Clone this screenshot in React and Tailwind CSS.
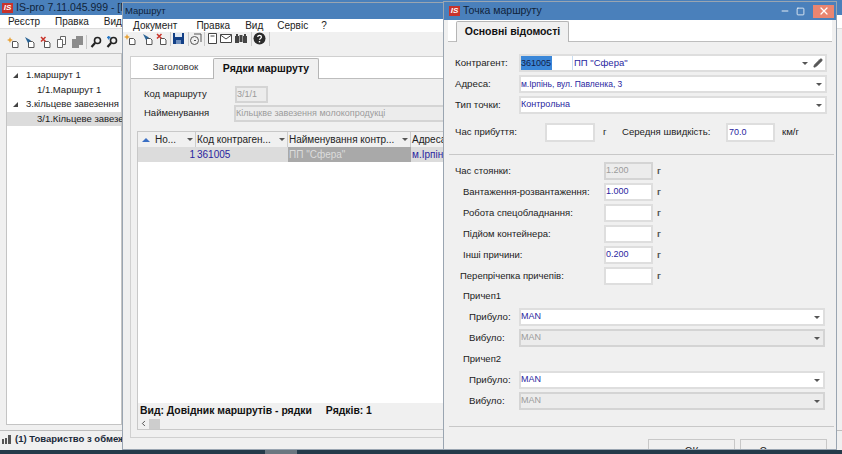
import { Fragment } from "react";
import { ChevronLeft, Minus, Pencil, Square, X } from "lucide-react";

const Arrow = ({ className = "" }) => (
  <span className={"ml-auto w-0 h-0 border-x-[3px] border-x-transparent border-t-[3px] border-t-[#555] " + className}></span>
);

// іконки панелі інструментів
const DocIcon = ({ mark, className = "" }) => (
  <svg className={className} width="14" height="14" viewBox="0 0 14 14">
    <path d="M6.500 6.500h4l1.500 1.500v4.500H6.500z" fill="#fff" stroke="#555" />
    {mark === "new" && <path d="M4 2l.9 2.100L7 5l-2.100.9L4 8l-.9-2.100L1 5l2.100-.9z" fill="#e8a33a" />}
    {mark === "edit" && <path d="M3 2l6 3.500-3 2.500z" fill="#2a6496" />}
    {mark === "del" && <path d="M3 2l4.500 4.500M7.500 2L3 6.500" stroke="#c8342b" strokeWidth="1.500" />}
  </svg>
);
const Copy = () => (
  <svg width="14" height="14" viewBox="0 0 14 14" fill="#fff" stroke="#666">
    <path d="M6.500 1.500h5v8h-5z" />
    <path d="M3.500 4.500h5v8h-5z" />
  </svg>
);
const CopyGray = () => (
  <svg width="14" height="14" viewBox="0 0 14 14" fill="#8c8c8c">
    <path d="M6 1h7v9H6z" />
    <path d="M2 4h7v9H2z" />
  </svg>
);
const Search = ({ plus }) => (
  <svg width="14" height="14" viewBox="0 0 14 14" fill="none" stroke="#222" strokeWidth="1.600">
    <circle cx="8.500" cy="5.500" r="3" />
    <path d="M6 8L2.500 12" strokeWidth="2.200" />
    {plus && <path d="M2 2.500h3.500M3.700 1v3.500" stroke="#2a78c4" strokeWidth="1.400" />}
  </svg>
);
const Save = ({ className = "" }) => (
  <svg className={className} width="13" height="13" viewBox="0 0 13 13">
    <path d="M1 1h11v11H1z" fill="#123f86" />
    <path d="M3 1h7v4H3z" fill="#dfe8f4" />
    <path d="M4 8h5v4H4z" fill="#6f8fbd" />
  </svg>
);
const Refresh = ({ className = "" }) => (
  <svg className={className} width="14" height="14" viewBox="0 0 14 14" fill="none" stroke="#555">
    <circle cx="5.500" cy="8.500" r="4" />
    <path d="M5 2h7v8" />
    <path d="M5 8.500h2" />
  </svg>
);
const Page = ({ className = "" }) => (
  <svg className={className} width="13" height="13" viewBox="0 0 13 13" fill="#fff" stroke="#444">
    <path d="M2.500 1.500h8v10h-8z" />
    <path d="M4.500 4h4" />
  </svg>
);
const Mail = ({ className = "" }) => (
  <svg className={className} width="14" height="13" viewBox="0 0 14 13" fill="#fff" stroke="#444">
    <path d="M1.500 2.500h11v8h-11z" />
    <path d="M1.500 3l5.500 4 5.500-4" fill="none" />
  </svg>
);
const Binoc = ({ className = "" }) => (
  <svg className={className} width="14" height="13" viewBox="0 0 14 13" fill="#444">
    <path d="M1 4h4v7H1zM9 4h4v7H9zM2 2h2v2H2zM10 2h2v2h-2zM5.500 3h3v7h-3z" />
  </svg>
);
const Help = ({ className = "" }) => (
  <svg className={className} width="13" height="13" viewBox="0 0 13 13">
    <circle cx="6.500" cy="6.500" r="6" fill="#2b2b2b" />
    <path d="M4.700 5c0-2.300 3.700-2.300 3.700 0 0 1.400-1.900 1.400-1.900 2.800" stroke="#fff" strokeWidth="1.300" fill="none" />
    <path d="M5.800 9h1.400v1.400H5.800z" fill="#fff" />
  </svg>
);
const Logo = () => (
  <span className="flex items-center justify-center w-[11px] h-[10px] bg-[#c8322b] text-white text-[8px] font-bold italic leading-none shrink-0">IS</span>
);
const Sep = ({ className = "" }) => <span className={"w-px h-[14px] bg-[#c9c9c9] shrink-0 " + className}></span>;

// віконна рамка для вільно розміщених вікон
const Window = ({ className, children }) => (
  <div className={"absolute flex flex-col overflow-hidden bg-[#f0f0f0] border border-[#9aa5b1] " + className}>{children}</div>
);

const Field = ({ children, disabled, className = "" }) => (
  <div className={"flex items-center border-2 text-[9px] whitespace-nowrap " + (disabled ? "border-[#d4d4d4] bg-[#ececec] text-[#9b9b9b] " : "border-[#dedede] bg-white text-[#2a1fa0] ") + className}>
    {children}
  </div>
);

const hours = [
  ["Час стоянки:", "1.200", true, "pl-[6px]"],
  ["Вантаження-розвантаження:", "1.000", false, "pl-[14px]"],
  ["Робота спецобладнання:", "", false, "pl-[14px]"],
  ["Підйом контейнера:", "", false, "pl-[14px]"],
  ["Інші причини:", "0.200", false, "pl-[14px]"],
  ["Перепрічепка причепів:", "", false, "pl-[11px]"],
];

const trailers = ["Причеп1", "Причеп2"];

export default function App() {
  return (
    <div className="relative w-[842px] h-[454px] overflow-hidden bg-[#f0f0f0] font-['Liberation_Sans',sans-serif] text-[10px] text-[#222]">
      {/* головне вікно */}
      <div className="flex flex-col">
        <div className="flex items-center gap-[3px] h-[15px] bg-[#4a80bb] pl-[2px] text-[10.500px] whitespace-nowrap">
          <Logo />
          <span className="text-[#10233a]">IS-pro 7.11.045.999 - [Ма</span>
        </div>
        <div className="flex items-center gap-[15px] h-[13px] pl-[8px] bg-white text-[10px]">
          <span>Реєстр</span>
          <span>Правка</span>
          <span>Вид</span>
        </div>
        <div className="flex items-center gap-[2px] h-[25px] pt-[2px] pl-[6px] border-t border-[#ddd]">
          <DocIcon mark="new" />
          <DocIcon mark="edit" />
          <DocIcon mark="del" />
          <Copy />
          <CopyGray />
          <Sep />
          <Search />
          <Search plus />
          <Refresh />
        </div>
        <div className="flex flex-col w-[116px] ml-[6px] h-[372px] border border-[#c4c4c4]">
          <div className="h-[13px] bg-[#f0f0f0] border-b border-[#cfcfcf]"></div>
          <div className="flex flex-col flex-1 bg-white pt-[1px] text-[9.500px] leading-[14.500px] whitespace-nowrap">
            <div className="flex items-center pl-[6px]">
              <span className="w-0 h-0 border-l-[5px] border-l-transparent border-b-[5px] border-b-[#444] mr-[8px]"></span>
              1.маршрут 1
            </div>
            <div className="pl-[30px]">1/1.Маршрут 1</div>
            <div className="flex items-center pl-[6px]">
              <span className="w-0 h-0 border-l-[5px] border-l-transparent border-b-[5px] border-b-[#444] mr-[8px]"></span>
              3.кільцеве завезення
            </div>
            <div className="pl-[30px] bg-[#dcdcdc]">3/1.Кільцеве завезе.</div>
          </div>
        </div>
        <div className="flex items-center gap-[3px] h-[18px] pl-[2px] mt-[5px] border-t border-[#bdbdbd] font-bold text-[9.500px] text-[#1b2a3a] whitespace-nowrap">
          <svg width="10" height="9" viewBox="0 0 10 9" fill="#555">
            <path d="M0 4h2v5H0zM3 3h2v6H3zM6 0h3v9H6z" />
          </svg>
          (1) Товариство з обмеж
        </div>
      </div>
      <div className="absolute left-0 right-0 bottom-0 flex h-[4px] bg-[#243b4a]">
        <span className="ml-[265px] w-[32px] bg-[#6b7780]"></span>
      </div>

      {/* вікно Маршрут */}
      <Window className="left-[122px] top-[2px] w-[322px] h-[448px]">
        <div className="flex items-center shrink-0 h-[16px] pl-[2px] bg-[#4a80bb] text-[9.500px] text-[#10233a]">Маршрут</div>
        <div className="flex items-center shrink-0 h-[13px] pl-[10px] bg-white text-[10px]">
          <span>Документ</span>
          <span className="ml-[19px]">Правка</span>
          <span className="ml-[15px]">Вид</span>
          <span className="ml-[14px]">Сервіс</span>
          <span className="ml-[13px]">?</span>
        </div>
        <div className="flex items-center shrink-0 h-[13px]">
          <DocIcon mark="new" />
          <DocIcon mark="edit" className="ml-[3px]" />
          <DocIcon mark="del" />
          <Sep className="ml-[2px]" />
          <Save className="ml-[1px]" />
          <Sep className="ml-[3px]" />
          <Refresh />
          <Sep className="ml-[1px]" />
          <Page className="ml-[1px]" />
          <Mail />
          <Binoc className="ml-[1px]" />
          <Sep className="ml-[3px]" />
          <Help className="ml-[1px]" />
          <Sep className="ml-[3px]" />
        </div>
        <div className="flex flex-col flex-1 min-h-0 ml-[7px] -mr-[40px] mt-[11px] mb-[11px] border border-[#d0d0d0]">
          <div className="flex shrink-0 h-[22px] bg-white border-b border-[#bdbdbd] pl-[1px]">
            <div className="flex items-center justify-center w-[81px] pl-[6px] text-[9.700px] text-[#333]">Заголовок</div>
            <div className="flex items-center justify-center self-end -mb-px w-[106px] h-[21px] bg-[#f0f0f0] border border-[#b5b5b5] border-b-0 rounded-t-[2px] font-bold text-[10.500px] text-[#111]">Рядки маршруту</div>
          </div>
          <div className="flex flex-col flex-1 min-h-0 pl-[6px] pr-[6px]">
            <div className="flex items-center h-[17px] mt-[7px] text-[9.500px]">
              <span className="w-[98px] pl-[7px]">Код маршруту</span>
              <Field disabled className="w-[33px] h-[17px]">3/1/1</Field>
            </div>
            <div className="flex items-center h-[17px] mt-[2px] text-[9.500px]">
              <span className="w-[97px] pl-[7px]">Найменування</span>
              <Field disabled className="flex-1 h-[17px] overflow-hidden">Кільцкве завезення молокопродукці</Field>
            </div>
            <div className="flex flex-col flex-1 min-h-0 mt-[9px] mb-[7px] border border-[#c8c8c8] bg-white">
              <div className="flex shrink-0 h-[15px] bg-[#f0f0f0] text-[10px] whitespace-nowrap">
                <div className="flex items-center w-[58px] pl-[4px] border-r border-[#ccc]">
                  <span className="w-0 h-0 mr-[5px] border-x-[4px] border-x-transparent border-b-[4px] border-b-[#3a6fc4]"></span>
                  Но...
                  <Arrow className="mr-[2px]" />
                </div>
                <div className="flex items-center w-[92px] pl-[1px] border-r border-[#ccc]">
                  Код контраген...
                  <Arrow className="mr-[2px]" />
                </div>
                <div className="flex items-center w-[123px] pl-[1px] border-r border-[#ccc]">
                  Найменування контр...
                  <Arrow className="mr-[2px]" />
                </div>
                <div className="flex-1 pl-[1px]">Адреса</div>
              </div>
              <div className="flex shrink-0 h-[15px] bg-[#dcdcdc] text-[10px] text-[#2a1fa0] whitespace-nowrap">
                <div className="w-[58px] pr-[1px] text-right">1</div>
                <div className="w-[92px] pl-[1px]">361005</div>
                <div className="w-[123px] pl-[1px] bg-[#a9a9a9] text-[#dcdcdc]">ПП "Сфера"</div>
                <div className="flex-1 pl-[1px]">м.Ірпінь</div>
              </div>
              <div className="flex-1"></div>
              <div className="flex items-center gap-[14px] shrink-0 h-[15px] pl-[2px] bg-[#f0f0f0] font-bold text-[10.400px] text-[#111] whitespace-nowrap">
                <span>Вид: Довідник маршрутів - рядки</span>
                <span>Рядків: 1</span>
              </div>
              <div className="flex items-center shrink-0 h-[11px] bg-[#f0f0f0]">
                <ChevronLeft size={9} strokeWidth={2} className="mx-[1px]" />
                <span className="w-[11px] h-[10px] bg-[#cdcdcd]"></span>
              </div>
            </div>
          </div>
        </div>
      </Window>

      {/* діалог Точка маршруту */}
      <Window className="left-[443px] top-[1px] w-[394px] h-[449px]">
        <div className="flex items-center shrink-0 h-[18px] pl-[5px] bg-[#4a80bb] text-[10.500px] text-[#10233a]">
          <Logo />
          <span className="ml-[3px]">Точка маршруту</span>
          <Minus size={10} strokeWidth={2} className="ml-auto text-white" />
          <Square size={9} strokeWidth={2} className="ml-[6px] text-white" />
          <span className="flex items-center justify-center w-[21px] h-[13px] ml-[8px] mr-[2px] bg-[#ea8570]">
            <X size={12} strokeWidth={2.500} className="text-white" />
          </span>
        </div>
        <div className="flex shrink-0 h-[22px] bg-white border-b border-[#bdbdbd] pl-[8px] mx-[4px]">
          <div className="flex items-center justify-center self-end -mb-px w-[113px] h-[21px] bg-[#f0f0f0] border border-[#b5b5b5] border-b-0 rounded-t-[2px] font-bold text-[10.500px] text-[#111]">Основні відомості</div>
        </div>
        <div className="flex flex-col pl-[5px] pr-[2px]">
          <div className="flex items-center h-[18px] mt-[12px] text-[9.700px]">
            <span className="w-[70px] pl-[6px]">Контрагент:</span>
            <div className="flex flex-1 items-center h-[18px] mr-[7px] border-2 border-[#dedede] bg-white text-[#2a1fa0]">
              <span className="flex items-center w-[52px] h-full border-r border-[#c9ddf2] text-[9px]">
                <span className="bg-[#3b87d8] text-[#12204a] leading-[14px] pr-[1px]">361005</span>
              </span>
              <span className="pl-[1px] text-[9.500px]">ПП "Сфера"</span>
              <Arrow className="mr-[5px]" />
              <Pencil size={10} fill="#555" className="mr-[2px] text-[#555]" />
            </div>
          </div>
          <div className="flex items-center h-[18px] mt-[3px] text-[9.700px]">
            <span className="w-[70px] pl-[6px]">Адреса:</span>
            <Field className="flex-1 mr-[7px] h-[18px]">
              <span className="text-[8.500px]">м.Ірпінь, вул. Павленка, 3</span>
              <Arrow className="mr-[3px]" />
            </Field>
          </div>
          <div className="flex items-center h-[18px] mt-[3px] text-[9.700px]">
            <span className="w-[70px] pl-[6px]">Тип точки:</span>
            <Field className="flex-1 mr-[7px] h-[18px]">Контрольна<Arrow className="mr-[3px]" /></Field>
          </div>
          <div className="flex items-center h-[19px] mt-[9px] text-[9.600px] whitespace-nowrap">
            <span className="w-[96px] pl-[6px]">Час прибуття:</span>
            <Field className="w-[50px] h-[19px]"></Field>
            <span className="w-[27px] pl-[8px]">г</span>
            <span className="w-[104px]">Середня швидкість:</span>
            <Field className="w-[49px] h-[19px]"><span className="pl-[1px]">70.0</span></Field>
            <span className="pl-[7px]">км/г</span>
          </div>
          <div className="h-px bg-[#c8c8c8] mt-[12px]"></div>
          <div className="flex flex-col gap-[3px] mt-[7px]">
            {hours.map(([label, value, disabled, pad]) => (
              <div key={label} className="flex items-center h-[18px] text-[9.500px] whitespace-nowrap">
                <span className={"w-[155px] " + pad}>{label}</span>
                <Field disabled={disabled} className="w-[49px] h-[18px]">{value}</Field>
                <span className="pl-[4px] font-bold text-[#555]">г</span>
              </div>
            ))}
          </div>
          {trailers.map((name, i) => (
            <Fragment key={name}>
              <div className={"flex items-center h-[14px] pl-[14px] text-[9.500px] " + (i === 0 ? "mt-[4px]" : "mt-[5px]")}>{name}</div>
              <div className="flex items-center h-[18px] mt-[5px] text-[9.700px]">
                <span className="w-[70px] pl-[20px]">Прибуло:</span>
                <Field className="flex-1 mr-[9px] h-[18px]">MAN<Arrow className="mr-[3px]" /></Field>
              </div>
              <div className="flex items-center h-[18px] mt-[3px] text-[9.700px]">
                <span className="w-[70px] pl-[20px]">Вибуло:</span>
                <Field disabled className="flex-1 mr-[9px] h-[18px]">MAN<Arrow className="mr-[3px]" /></Field>
              </div>
            </Fragment>
          ))}
          <div className="h-px bg-[#c8c8c8] mt-[16px]"></div>
          <div className="flex justify-end gap-[5px] mt-[12px] mr-[7px] text-[10px]">
            <div className="flex items-center justify-center w-[87px] h-[24px] border border-[#c8c8c8]">ОК</div>
            <div className="flex items-center justify-center w-[87px] h-[24px] border border-[#c8c8c8]">Скасувати</div>
          </div>
        </div>
      </Window>
    </div>
  );
}
